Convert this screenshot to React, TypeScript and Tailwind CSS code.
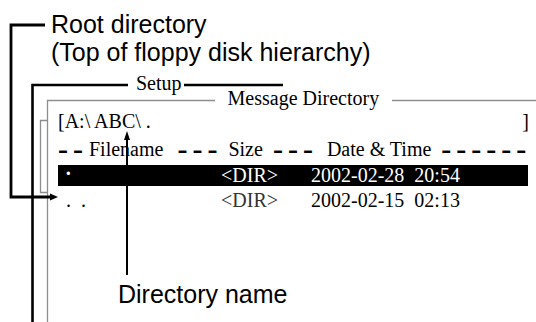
import React from 'react'

const sans = "font-['Liberation_Sans',Arial,sans-serif]"
const serif = "font-['Liberation_Serif','Times_New_Roman',serif]"

function Dashes({ n }: { n: number }) {
  return (
    <span className="font-['DejaVu_Sans',sans-serif] font-bold text-[20px] tracking-[5px] translate-y-[1px] inline-block">
      {'–'.repeat(n)}
    </span>
  )
}

function Callouts() {
  return (
    <svg className="absolute inset-0 pointer-events-none" width="536" height="322" viewBox="0 0 536 322">
      {/* message directory frame */}
      <g stroke="#8e8e8e" strokeWidth="1.3" fill="none">
        <path d="M215 100.5 H47.5 V322" />
        <path d="M392 100.5 H536" />
        <path d="M47 120.5 H40.5 V192.5 H47" />
      </g>
      {/* setup frame */}
      <g stroke="#000" strokeWidth="2.6" fill="none">
        <path d="M128 85 H32.5 V322" />
        <path d="M184 85 H283" />
      </g>
      {/* root directory */}
      <path d="M45 25 H11 V197 H51" stroke="#000" strokeWidth="2.8" fill="none" />
      <polygon points="50,193.5 58,197 50,200.5" fill="#000" />
      {/* directory name */}
      <path d="M127 275 V138" stroke="#000" strokeWidth="2" fill="none" />
      <polygon points="124,140 127,131 130,140" fill="#000" />
    </svg>
  )
}

export default function App() {
  return (
    <div className="relative w-[536px] h-[322px] bg-white overflow-hidden text-black">
      {/* Root label */}
      <div className={`${sans} text-[25px] leading-[28px] pt-[10px] pl-[51px]`}>
        <div>Root directory</div>
        <div>(Top of floppy disk hierarchy)</div>
      </div>

      {/* Setup / Message Directory titles */}
      <div className={`${serif} flex items-start mt-[7px] text-[20px] leading-[20px]`}>
        <span className="ml-[136px]">Setup</span>
        <span className="ml-[46px] mt-[15px]">Message Directory</span>
      </div>

      {/* Directory listing */}
      <div className={`${serif} pl-[58px] text-[20px]`}>
        <div className="mt-[3px] w-[471px] flex justify-between leading-[20px]">
          <span>[A:\ ABC\ .</span>
          <span>]</span>
        </div>

        <div className="mt-[8px] h-[20px] flex items-baseline leading-[20px]">
          <Dashes n={2} />
          <span className="ml-[1px]">Filename</span>
          <span className="ml-[14px]"><Dashes n={3} /></span>
          <span className="ml-[6px]">Size</span>
          <span className="ml-[10px]"><Dashes n={3} /></span>
          <span className="ml-[9px]">Date &amp; Time</span>
          <span className="ml-[10px]"><Dashes n={6} /></span>
        </div>

        <div className="mt-[6px] w-[470px] h-[21px] bg-black text-white flex leading-[21px] whitespace-pre">
          <span className="w-[163px] pl-[7px]"><span className="inline-block font-bold -translate-y-[2px]">·</span></span>
          <span className="w-[90px]">&lt;DIR&gt;</span>
          <span>2002-02-28  20:54</span>
        </div>

        <div className="mt-[3px] flex leading-[22px] whitespace-pre">
          <span className="w-[163px] pl-[8px]">.  .</span>
          <span className="w-[90px] text-[#333]">&lt;DIR&gt;</span>
          <span>2002-02-15  02:13</span>
        </div>
      </div>

      {/* Directory name label */}
      <div className={`${sans} text-[25px] leading-[28px] mt-[69px] ml-[118px]`}>
        Directory name
      </div>

      <Callouts />
    </div>
  )
}
